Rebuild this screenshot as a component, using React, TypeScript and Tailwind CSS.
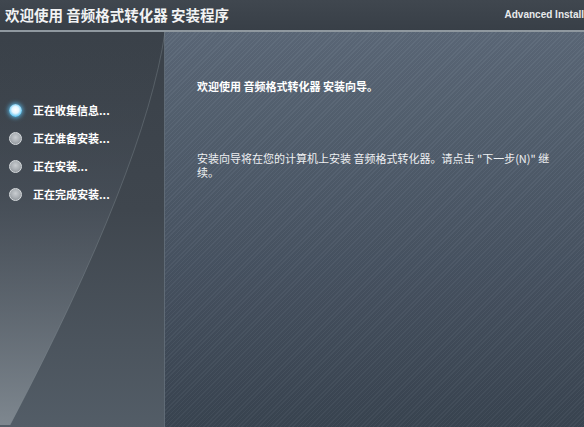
import React from 'react';

const steps = ['正在收集信息...', '正在准备安装...', '正在安装...', '正在完成安装...'];

const cjk = { fontFamily: '"Noto Sans CJK SC", "Noto Sans", sans-serif' };

const Radio = ({ active }: { active: boolean }) =>
  active ? (
    <span className="w-[13px] h-[13px] rounded-full shrink-0 bg-[radial-gradient(circle_at_50%_45%,#ffffff_0%,#e6f6ff_35%,#5cc4f2_70%,#2a8fc8_100%)] shadow-[0_0_4px_1px_rgba(90,190,240,0.8)]" />
  ) : (
    <span className="w-[13px] h-[13px] rounded-full shrink-0 border border-[#d8dcdf] bg-[radial-gradient(circle_at_50%_40%,#c9cdd1_0%,#a6abb0_55%,#7e848a_100%)]" />
  );

export default function App() {
  return (
    <div className="w-[584px] h-[427px] flex flex-col overflow-hidden bg-[#3b4249]" style={cjk}>
      {/* title bar */}
      <div className="h-[32px] shrink-0 flex items-center justify-between pl-[5px] bg-[linear-gradient(to_bottom,#40474f,#383f47)] border-b-2 border-[#8f989f]">
        <span className="text-[14.5px] font-bold text-[#f2f3f4] whitespace-nowrap leading-none">欢迎使用 音频格式转化器 安装程序</span>
        <span className="text-[10px] font-bold text-[#e8eaec] whitespace-nowrap leading-none" style={{ fontFamily: '"Liberation Sans", Arial, sans-serif' }}>
          Advanced Install
        </span>
      </div>

      <div className="flex flex-1 min-h-0">
        {/* left steps panel */}
        <div className="relative w-[165px] shrink-0 bg-[linear-gradient(to_bottom,#3a4149_0%,#3f464e_45%,#535d67_100%)] border-r border-[#5f6a75]">
          <svg className="absolute inset-0" width="165" height="393" viewBox="0 34 165 393">
            <defs>
              <linearGradient id="lite" x1="0" y1="0" x2="0" y2="1">
                <stop offset="0" stopColor="#3a4149" stopOpacity="0" />
                <stop offset="0.4" stopColor="#48505a" stopOpacity="0.6" />
                <stop offset="1" stopColor="#7e878f" />
              </linearGradient>
            </defs>
            <path d="M0 34 L165 34 Q145 170 10 427 L0 427 Z" fill="url(#lite)" />
            <path d="M165 34 Q145 170 10 427" fill="none" stroke="#8a949c" strokeOpacity="0.35" strokeWidth="1" />
          </svg>
          <ul className="relative flex flex-col gap-[11px] pt-[70px] pl-[9px]">
            {steps.map((s, i) => (
              <li key={s} className="flex items-center gap-[11px] h-[17px]">
                <Radio active={i === 0} />
                <span className="text-[11px] font-bold text-white leading-none">{s}</span>
              </li>
            ))}
          </ul>
        </div>

        {/* right content */}
        <div className="flex-1 pl-[32px] pt-[47px] bg-[repeating-linear-gradient(135deg,rgba(255,255,255,0.03)_0px,rgba(255,255,255,0.03)_1px,rgba(0,0,0,0.035)_1px,rgba(0,0,0,0.035)_3px),linear-gradient(to_bottom,#5c6979_0%,#4b5766_50%,#3a4552_100%)]">
          <p className="text-[11px] font-bold text-white leading-[14px]">欢迎使用 音频格式转化器 安装向导。</p>
          <p className="mt-[58px] w-[358px] text-[11px] text-[#eef0f2] leading-[14px]">
            安装向导将在您的计算机上安装 音频格式转化器。请点击 "下一步(N)" 继续。
          </p>
        </div>
      </div>
    </div>
  );
}
